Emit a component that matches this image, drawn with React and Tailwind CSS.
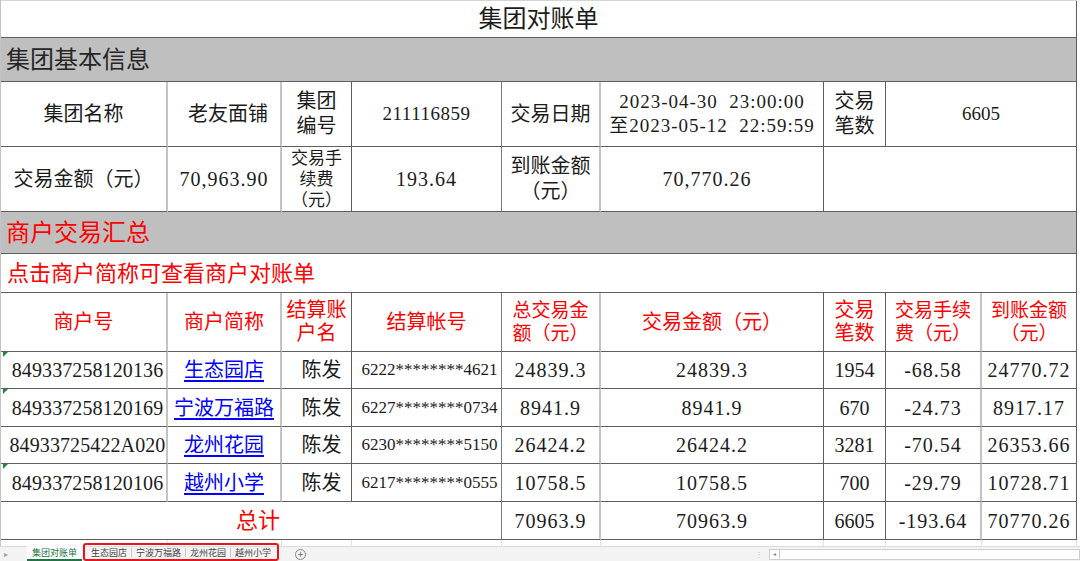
import React from 'react';

const GRID = 'grid grid-cols-[167px_114px_70px_150px_99px_223px_62px_96px_95px]';

const SPAN = {
  1: 'col-span-1',
  2: 'col-span-2',
  3: 'col-span-3',
  4: 'col-span-4',
  5: 'col-span-5',
  6: 'col-span-6',
  7: 'col-span-7',
  8: 'col-span-8',
  9: 'col-span-9',
};

// right border by the column the cell ends on
const EDGE = {
  1: 'border-r-2 border-r-[#c4c4c4]',
  2: 'border-r-2 border-r-[#c4c4c4]',
  3: 'border-r border-r-[#5f5f5f]',
  4: 'border-r border-r-[#7a7a7a]',
  5: 'border-r-2 border-r-[#c4c4c4]',
  6: 'border-r border-r-[#5f5f5f]',
  7: 'border-r border-r-[#5f5f5f]',
  8: 'border-r-2 border-r-[#c4c4c4]',
  9: 'border-r border-r-[#5f5f5f]',
};

const Cell = ({ span = 1, end, className = '', children }) => (
  <div
    className={`${SPAN[span]} ${EDGE[end]} relative flex items-center justify-center text-center border-b border-b-[#5f5f5f] ${className}`}
  >
    {children}
  </div>
);

const Row = ({ h, children }) => <div className={`${GRID} ${h}`}>{children}</div>;

const Flag = () => (
  <span className="absolute top-0 left-[2px] w-0 h-0 border-t-[5px] border-t-[#1f8a3b] border-r-[5px] border-r-transparent" />
);

const merchants = [
  { id: '849337258120136', name: '生态园店', acct: '6222********4621', total: '24839.3', amt: '24839.3', cnt: '1954', fee: '-68.58', net: '24770.72', flag: true },
  { id: '849337258120169', name: '宁波万福路', acct: '6227********0734', total: '8941.9', amt: '8941.9', cnt: '670', fee: '-24.73', net: '8917.17', flag: true },
  { id: '84933725422A020', name: '龙州花园', acct: '6230********5150', total: '26424.2', amt: '26424.2', cnt: '3281', fee: '-70.54', net: '26353.66', flag: false },
  { id: '849337258120106', name: '越州小学', acct: '6217********0555', total: '10758.5', amt: '10758.5', cnt: '700', fee: '-29.79', net: '10728.71', flag: true },
];

const sheetTabs = ['生态园店', '宁波万福路', '龙州花园', '越州小学'];

export default function App() {
  return (
    <div className="w-[1080px] h-[561px] overflow-hidden bg-white text-[#1c1c1c] font-['Liberation_Serif','Noto_Sans_CJK_SC',serif]">
      <div className="w-[1077px] border-l border-l-[#c4c4c4]">
        <div className="h-px bg-[#d4d4d4]" />

        {/* title */}
        <Row h="h-[37px]">
          <Cell span={9} end={9} className="text-[24px]">集团对账单</Cell>
        </Row>

        <Row h="h-[44px]">
          <Cell span={9} end={9} className="!justify-start bg-[#bfbfbf] pl-[5px] text-[24px] text-[#262626]">集团基本信息</Cell>
        </Row>

        <Row h="h-[65px]">
          <Cell end={1} className="text-[20px]">集团名称</Cell>
          <Cell end={2} className="text-[20px] pl-[8px]">老友面铺</Cell>
          <Cell end={3} className="text-[20px] leading-[25px]">集团<br />编号</Cell>
          <Cell end={4} className="text-[19px] tracking-[0.5px]">211116859</Cell>
          <Cell end={5} className="text-[20px]">交易日期</Cell>
          <Cell end={6} className="text-[19px] leading-[24px] tracking-[1px]">
            2023-04-30&nbsp;&nbsp;23:00:00<br />至2023-05-12&nbsp;&nbsp;22:59:59
          </Cell>
          <Cell end={7} className="text-[20px] leading-[25px]">交易<br />笔数</Cell>
          <Cell span={2} end={9} className="text-[19px]">6605</Cell>
        </Row>

        <Row h="h-[65px]">
          <Cell end={1} className="text-[20px]">交易金额（元）</Cell>
          <Cell end={2} className="text-[20px] tracking-[1px]">70,963.90</Cell>
          <Cell end={3} className="text-[17px] leading-[21px]">交易手<br />续费<br />（元）</Cell>
          <Cell end={4} className="text-[20px] tracking-[1px]">193.64</Cell>
          <Cell end={5} className="text-[20px] leading-[25px]">到账金额<br />（元）</Cell>
          <Cell end={6} className="text-[20px] tracking-[1px] pr-[10px]">70,770.26</Cell>
          <Cell span={3} end={9} />
        </Row>

        <Row h="h-[42px]">
          <Cell span={9} end={9} className="!justify-start bg-[#bfbfbf] pl-[5px] text-[24px] text-[#ff0000]">商户交易汇总</Cell>
        </Row>

        <Row h="h-[39px]">
          <Cell span={9} end={9} className="!justify-start pl-[6px] text-[22px] text-[#ff0000]">点击商户简称可查看商户对账单</Cell>
        </Row>

        {/* merchant header */}
        <Row h="h-[59px]">
          <Cell end={1} className="text-[20px] text-[#ff0000]">商户号</Cell>
          <Cell end={2} className="text-[20px] text-[#ff0000]">商户简称</Cell>
          <Cell end={3} className="text-[20px] leading-[23px] text-[#ff0000]">结算账<br />户名</Cell>
          <Cell end={4} className="text-[20px] text-[#ff0000]">结算帐号</Cell>
          <Cell end={5} className="text-[19px] leading-[23px] text-[#ff0000]">总交易金<br />额（元）</Cell>
          <Cell end={6} className="text-[20px] text-[#ff0000]">交易金额（元）</Cell>
          <Cell end={7} className="text-[20px] leading-[23px] text-[#ff0000]">交易<br />笔数</Cell>
          <Cell end={8} className="text-[19px] leading-[23px] text-[#ff0000]">交易手续<br />费（元）</Cell>
          <Cell end={9} className="text-[19px] leading-[23px] text-[#ff0000]">到账金额<br />（元）</Cell>
        </Row>

        {merchants.map((m, i) => (
          <Row key={m.id} h={i % 2 === 0 ? 'h-[37px]' : 'h-[38px]'}>
            <Cell end={1} className="text-[20px] pl-[8px] tracking-[0.1px]">
              {m.flag && <Flag />}
              {m.id}
            </Cell>
            <Cell end={2} className="text-[20px]">
              <span className="text-[#0000ff] underline underline-offset-[3px]">{m.name}</span>
            </Cell>
            <Cell end={3} className="text-[20px] pl-[10px]">陈发</Cell>
            <Cell end={4} className="text-[17px] pl-[6px]">{m.acct}</Cell>
            <Cell end={5} className="text-[20px] tracking-[1px]">{m.total}</Cell>
            <Cell end={6} className="text-[20px] tracking-[1px]">{m.amt}</Cell>
            <Cell end={7} className="text-[20px]">{m.cnt}</Cell>
            <Cell end={8} className="text-[20px] tracking-[1px]">{m.fee}</Cell>
            <Cell end={9} className="text-[20px] tracking-[1px]">{m.net}</Cell>
          </Row>
        ))}

        <Row h="h-[38px]">
          <Cell span={4} end={4} className="text-[22px] text-[#ff0000] pl-[14px]">总计</Cell>
          <Cell end={5} className="text-[20px] tracking-[1px]">70963.9</Cell>
          <Cell end={6} className="text-[20px] tracking-[1px]">70963.9</Cell>
          <Cell end={7} className="text-[20px]">6605</Cell>
          <Cell end={8} className="text-[20px] tracking-[1px]">-193.64</Cell>
          <Cell end={9} className="text-[20px] tracking-[1px]">70770.26</Cell>
        </Row>

        {/* empty gridline strip */}
        <div className={`${GRID} h-[6px]`}>
          <div className="border-r border-r-[#e2e2e2]" />
          <div className="border-r border-r-[#e2e2e2]" />
          <div className="border-r border-r-[#e2e2e2]" />
          <div className="border-r border-r-[#e2e2e2]" />
          <div className="border-r border-r-[#e2e2e2]" />
          <div className="border-r border-r-[#e2e2e2]" />
          <div className="border-r border-r-[#e2e2e2]" />
          <div className="border-r border-r-[#e2e2e2]" />
          <div className="border-r border-r-[#e2e2e2]" />
        </div>
      </div>

      {/* sheet tab bar */}
      <div className="flex items-center h-[15px] bg-[#f3f3f3] border-t border-t-[#dadada] font-['Noto_Sans_CJK_SC',sans-serif] text-[9px] leading-none">
        <span className="w-[27px] pl-[4px] text-[#a0a0a0] text-[8px]">▸</span>
        <div className="relative -top-px flex items-center justify-center w-[55px] h-[16px] bg-white border-b-2 border-b-[#217346] text-[#217346]">
          集团对账单
        </div>
        <div className="relative -top-[2px] flex items-center h-[18px] ml-px px-[2px] border-2 border-[#e8141c] rounded-[3px] text-[#444]">
          {sheetTabs.map((t, i) => (
            <React.Fragment key={t}>
              {i > 0 && <span className="w-px h-[9px] bg-[#c8c8c8]" />}
              <span className="px-[4px]">{t}</span>
            </React.Fragment>
          ))}
        </div>
        <span className="ml-[16px] flex items-center justify-center w-[11px] h-[11px] rounded-full border border-[#888] text-[#666] text-[10px] leading-none">+</span>
        <span className="ml-[449px] text-[#bdbdbd] text-[8px]">⋮</span>
        <div className="ml-[6px] flex items-center h-[11px] flex-1 border border-[#cfcfcf] bg-white">
          <span className="flex items-center justify-center w-[10px] h-full border-r border-r-[#cfcfcf] text-[6px] text-[#888]">◂</span>
        </div>
      </div>
    </div>
  );
}
